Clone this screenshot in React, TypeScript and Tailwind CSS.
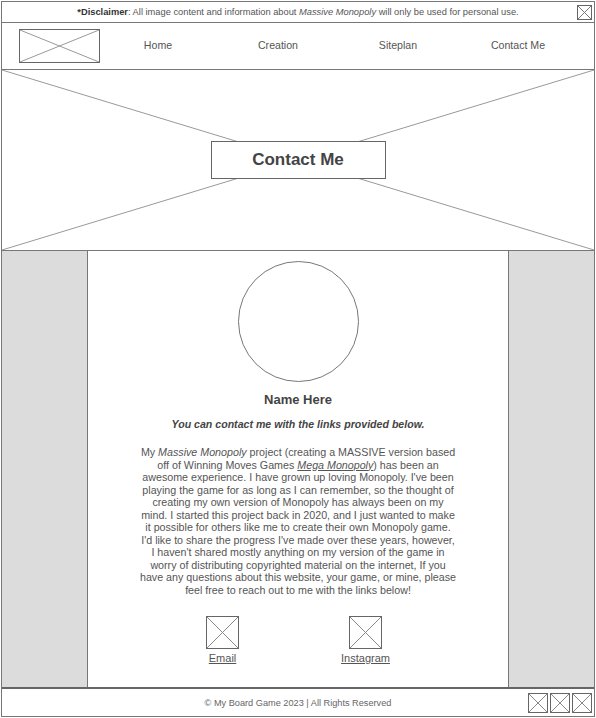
import React from "react";

function XBox({ className = "", stroke = "#888" }: { className?: string; stroke?: string }) {
  return (
    <div className={"border border-[#666] bg-white relative " + className}>
      <svg className="absolute inset-0 w-full h-full" preserveAspectRatio="none" viewBox="0 0 100 100">
        <line x1="0" y1="0" x2="100" y2="100" stroke={stroke} strokeWidth="1" vectorEffect="non-scaling-stroke" />
        <line x1="100" y1="0" x2="0" y2="100" stroke={stroke} strokeWidth="1" vectorEffect="non-scaling-stroke" />
      </svg>
    </div>
  );
}

export default function App() {
  const font = { fontFamily: '"Liberation Sans", Arial, sans-serif' };
  return (
    <div className="w-[596px] h-[718px] bg-white pt-px pl-px" style={font}>
      <div className="w-[594px] h-[716px] border border-[#777] flex flex-col text-[#555]">
        {/* Disclaimer */}
        <div className="h-[21px] shrink-0 border-b border-[#777] grid grid-cols-[1fr_auto_1fr] items-center">
          <div />
          <div className="text-[9.3px] leading-[12px] text-[#555] whitespace-nowrap">
            <span className="font-bold text-[#333]">*Disclaimer</span>: All image content and information about{" "}
            <span className="italic">Massive Monopoly</span> will only be used for personal use.
          </div>
          <div className="flex justify-end pr-[2px]">
            <XBox className="w-[15px] h-[15px]" stroke="#777" />
          </div>
        </div>

        {/* Nav */}
        <div className="h-[47px] shrink-0 border-b border-[#777] flex items-center pl-[17px]">
          <XBox className="w-[81px] h-[34px] -mt-[1px]" stroke="#999" />
          <div className="-ml-[2px] grid grid-cols-4 w-[480px] text-[10.6px] text-[#555]">
            <div className="text-center">Home</div>
            <div className="text-center">Creation</div>
            <div className="text-center">Siteplan</div>
            <div className="text-center">Contact Me</div>
          </div>
        </div>

        {/* Hero */}
        <div className="h-[181px] shrink-0 border-b border-[#777] relative flex items-center justify-center">
          <svg className="absolute inset-0 w-full h-full" preserveAspectRatio="none" viewBox="0 0 100 100">
            <line x1="0" y1="0" x2="100" y2="100" stroke="#999" strokeWidth="1" vectorEffect="non-scaling-stroke" />
            <line x1="100" y1="0" x2="0" y2="100" stroke="#999" strokeWidth="1" vectorEffect="non-scaling-stroke" />
          </svg>
          <div className="relative w-[175px] h-[38px] bg-white border border-[#666] flex items-center justify-center text-[17px] font-bold text-[#444]">
            Contact Me
          </div>
        </div>

        {/* Content */}
        <div className="h-[438px] shrink-0 border-b-2 border-[#666] flex">
          <div className="w-[86px] shrink-0 bg-[#dcdcdc] border-r border-[#777]" />
          <div className="flex-1 flex flex-col items-center pt-[10px]">
            <div className="w-[121px] h-[121px] rounded-full border border-[#777]" />
            <div className="mt-[10px] text-[13px] leading-[16px] font-bold text-[#444]">Name Here</div>
            <div className="mt-[10px] text-[10.6px] leading-[13px] font-bold italic text-[#444]">
              You can contact me with the links provided below.
            </div>
            <p className="mt-[15px] text-center text-[10.7px] leading-[12.5px] text-[#555] whitespace-nowrap">
              My <span className="italic">Massive Monopoly</span> project (creating a MASSIVE version based
              <br />
              off of Winning Moves Games <span className="italic underline">Mega Monopoly</span>) has been an
              <br />
              awesome experience. I have grown up loving Monopoly. I've been
              <br />
              playing the game for as long as I can remember, so the thought of
              <br />
              creating my own version of Monopoly has always been on my
              <br />
              mind. I started this project back in 2020, and I just wanted to make
              <br />
              it possible for others like me to create their own Monopoly game.
              <br />
              I'd like to share the progress I've made over these years, however,
              <br />
              I haven't shared mostly anything on my version of the game in
              <br />
              worry of distributing copyrighted material on the internet, If you
              <br />
              have any questions about this website, your game, or mine, please
              <br />
              feel free to reach out to me with the links below!
            </p>
            <div className="mt-[20px] flex gap-[102px]">
              <div className="flex flex-col items-center">
                <XBox className="w-[33px] h-[33px]" stroke="#888" />
                <span className="mt-[3px] text-[11px] leading-[13px] underline text-[#555]">Email</span>
              </div>
              <div className="flex flex-col items-center">
                <XBox className="w-[33px] h-[33px]" stroke="#888" />
                <span className="mt-[3px] text-[11px] leading-[13px] underline text-[#555]">Instagram</span>
              </div>
            </div>
          </div>
          <div className="w-[86px] shrink-0 bg-[#dcdcdc] border-l border-[#777]" />
        </div>

        {/* Footer */}
        <div className="flex-1 grid grid-cols-[1fr_auto_1fr] items-center">
          <div />
          <div className="text-[9.2px] leading-[12px] text-[#666] whitespace-nowrap">
            © My Board Game 2023 | All Rights Reserved
          </div>
          <div className="flex justify-end pr-[2px] gap-[2px]">
            <XBox className="w-[20px] h-[20px]" stroke="#888" />
            <XBox className="w-[20px] h-[20px]" stroke="#888" />
            <XBox className="w-[20px] h-[20px]" stroke="#888" />
          </div>
        </div>
      </div>
    </div>
  );
}
